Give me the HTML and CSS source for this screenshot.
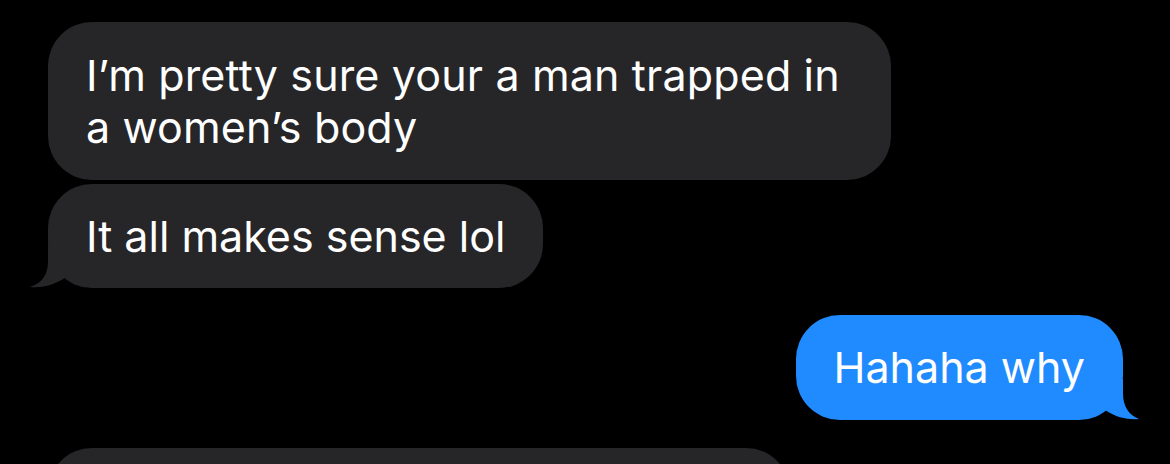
FILE: index.html
```html
<!DOCTYPE html>
<html>
<head>
<meta charset="utf-8">
<link rel="stylesheet" href="styles.css">
</head>
<body>
<div class="thread">
  <div class="bubble in first">I’m pretty sure your a man trapped in a women’s body</div>
  <div class="bubble in tailed">It all makes sense lol
    <svg class="tail tail-left" width="40" height="41" viewBox="0 0 40 41"><path d="M18 0 L18 14 C18 28 12 36 0 40 C10 41 24 39 36 30 L36 0 Z" fill="#262629"/></svg>
  </div>
  <div class="bubble out tailed">Hahaha why
    <svg class="tail tail-right" width="40" height="41" viewBox="0 0 40 41"><path d="M24 0 L24 14 C24 28 30 36 40 40 C30 41 18 39 6 31 L6 0 Z" fill="#1f8bff"/></svg>
  </div>
  <div class="bubble in partial"></div>
</div>
</body>
</html>
```
FILE: styles.css
```css
html, body {
  margin: 0;
  padding: 0;
  background: #000;
  overflow: hidden;
}
.thread {
  display: flex;
  flex-direction: column;
  padding: 22px 32px 0 48px;
  font-family: Inter, "Noto Sans", sans-serif;
  font-size: 43px;
  line-height: 52px;
  color: #fff;
}
.bubble {
  position: relative;
  box-sizing: border-box;
  padding: 26px 38px;
  border-radius: 44px;
  width: fit-content;
}
.in {
  background: #262629;
  align-self: flex-start;
}
.out {
  background: #1f8bff;
  align-self: flex-end;
  margin-right: 15px;
  margin-top: 27px;
  padding-bottom: 27px;
}
.first {
  max-width: 843px;
  padding-top: 27px;
  padding-bottom: 27px;
  letter-spacing: 0.15px;
}
.in + .in { margin-top: 4px; }
.tail {
  position: absolute;
  bottom: 0;
}
.tail-left { left: -18px; }
.tail-right { right: -16px; }
.partial {
  margin-top: 28px;
  width: 742px;
  height: 104px;
}
```
